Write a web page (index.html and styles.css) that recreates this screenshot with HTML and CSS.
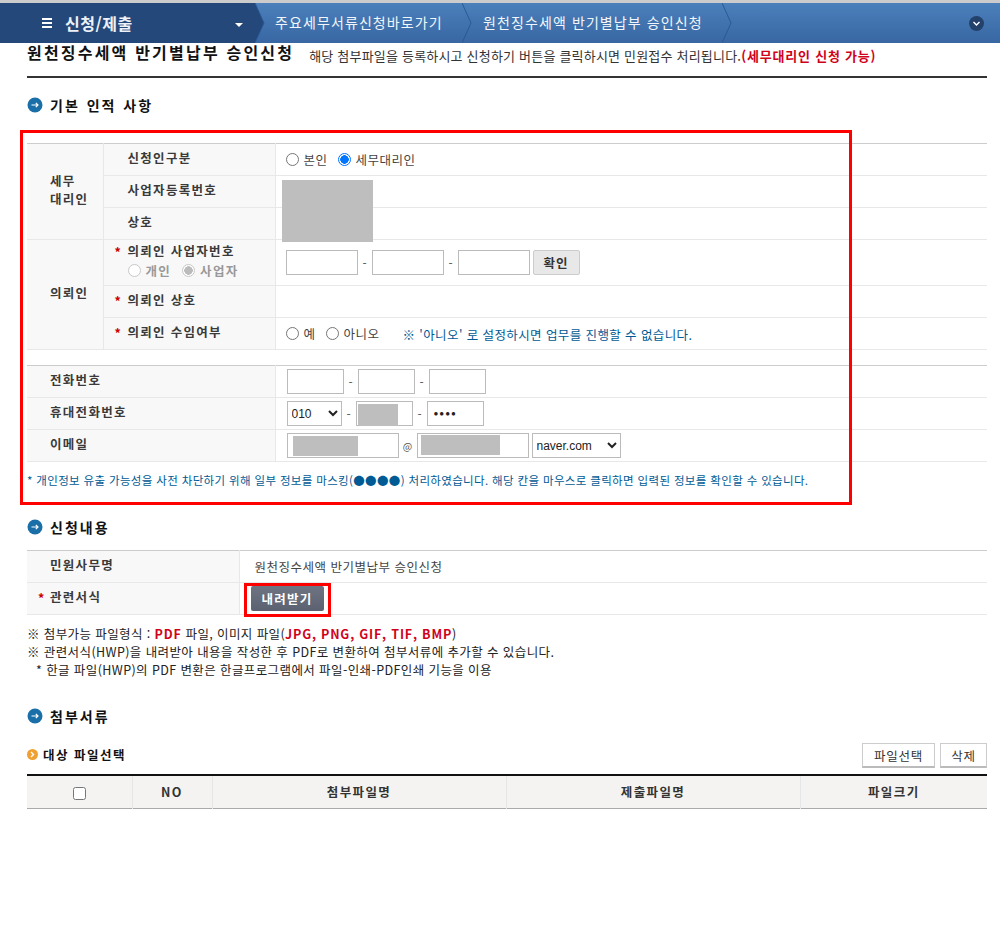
FILE: index.html
```html
<!DOCTYPE html>
<html lang="ko">
<head>
  <meta charset="UTF-8">
  <meta name="viewport" content="width=device-width, initial-scale=1.0">
  <title>원천징수세액 반기별납부 승인신청</title>
  <link rel="stylesheet" href="styles.css">
</head>
<body>
  <nav class="topbar">
    <div class="menu-main">
      <span class="burger"><i></i><i></i><i></i></span>
      <span class="menu-title">신청/제출</span>
      <span class="caret"></span>
      <svg class="chev chev-dark" viewBox="0 0 10 40" preserveAspectRatio="none"><path d="M0 0 L9 20 L0 40 Z" fill="#24487a"/><path d="M0 0 L9 20 L0 40" fill="none" stroke="#2a5a94"/></svg>
    </div>
    <div class="crumb">주요세무서류신청바로가기<svg class="chev" viewBox="0 0 10 40" preserveAspectRatio="none"><path d="M0 0 L9 20 L0 40" fill="none" stroke="#2a5a94"/></svg></div>
    <div class="crumb">원천징수세액 반기별납부 승인신청<svg class="chev" viewBox="0 0 10 40" preserveAspectRatio="none"><path d="M0 0 L9 20 L0 40" fill="none" stroke="#2a5a94"/></svg></div>
    <div class="crumb-spacer"></div>
    <svg class="more" viewBox="0 0 15 15"><circle cx="7.5" cy="7.5" r="7.5" fill="#24416b"/><path d="M4.5 6 L7.5 9 L10.5 6" fill="none" stroke="#fff" stroke-width="1.4"/></svg>
  </nav>

  <div class="container">
    <header class="page-head">
      <h1>원천징수세액 반기별납부 승인신청</h1>
      <p>해당 첨부파일을 등록하시고 신청하기 버튼을 클릭하시면 민원접수 처리됩니다.<b>(세무대리인 신청 가능)</b></p>
    </header>

    <h2 class="sec sec-first"><svg class="sec-icon" viewBox="0 0 16 16"><circle cx="8" cy="8" r="7.5" fill="#1b6fa8"/><path d="M4.5 8 H11 M8.8 5.8 L11 8 L8.8 10.2" fill="none" stroke="#fff" stroke-width="1.2"/></svg>기본 인적 사항</h2>

    <div class="box-wrap">
      <table class="form-table t1">
        <tr>
          <th class="col-a" rowspan="3">세무<br>대리인</th>
          <th class="col-b"><span class="lbl">신청인구분</span></th>
          <td class="radios"><label class="radio"><span class="dot"></span>본인</label><label class="radio"><span class="dot on"></span>세무대리인</label></td>
        </tr>
        <tr>
          <th class="col-b"><span class="lbl">사업자등록번호</span></th>
          <td class="masked-cell"><div class="mask mask-biz"></div></td>
        </tr>
        <tr>
          <th class="col-b"><span class="lbl">상호</span></th>
          <td></td>
        </tr>
        <tr class="tall">
          <th class="col-a" rowspan="3">의뢰인</th>
          <th class="col-b">
            <span class="lbl req">의뢰인 사업자번호</span>
            <span class="sub-radios"><label class="radio off"><span class="dot"></span>개인</label><label class="radio off"><span class="dot picked"></span>사업자</label></span>
          </th>
          <td><div class="fields"><input class="in in72" type="text"><span class="dash">-</span><input class="in in72" type="text"><span class="dash">-</span><input class="in in72" type="text"><button class="btn-check" type="button">확인</button></div></td>
        </tr>
        <tr>
          <th class="col-b"><span class="lbl req">의뢰인 상호</span></th>
          <td></td>
        </tr>
        <tr>
          <th class="col-b"><span class="lbl req">의뢰인 수임여부</span></th>
          <td class="radios"><label class="radio"><span class="dot"></span>예</label><label class="radio"><span class="dot"></span>아니오</label><span class="note">※ '아니오' 로 설정하시면 업무를 진행할 수 없습니다.</span></td>
        </tr>
      </table>

      <table class="form-table t2">
        <tr>
          <th class="col-w"><span class="lbl2">전화번호</span></th>
          <td><div class="fields fields-b"><input class="in in57" type="text"><span class="dash">-</span><input class="in in57" type="text"><span class="dash">-</span><input class="in in57" type="text"></div></td>
        </tr>
        <tr>
          <th class="col-w"><span class="lbl2">휴대전화번호</span></th>
          <td><div class="fields fields-b"><select class="sel sel55"><option>010</option></select><span class="dash">-</span><span class="mask-in"><input class="in in57" type="text"><span class="mask mask-tel"></span></span><span class="dash">-</span><input class="in in57 pw" type="text" value="●●●●"></div></td>
        </tr>
        <tr>
          <th class="col-w"><span class="lbl2">이메일</span></th>
          <td><div class="fields fields-b"><span class="mask-in"><input class="in in112" type="text"><span class="mask mask-mail1"></span></span><span class="at">@</span><span class="mask-in"><input class="in in112" type="text"><span class="mask mask-mail2"></span></span><select class="sel sel89"><option>naver.com</option></select></div></td>
        </tr>
      </table>
      <p class="privacy">* 개인정보 유출 가능성을 사전 차단하기 위해 일부 정보를 마스킹(●●●●) 처리하였습니다. 해당 칸을 마우스로 클릭하면 입력된 정보를 확인할 수 있습니다.</p>
      <div class="red-box red-main"></div>
    </div>

    <h2 class="sec sec-two"><svg class="sec-icon" viewBox="0 0 16 16"><circle cx="8" cy="8" r="7.5" fill="#1b6fa8"/><path d="M4.5 8 H11 M8.8 5.8 L11 8 L8.8 10.2" fill="none" stroke="#fff" stroke-width="1.2"/></svg>신청내용</h2>
    <table class="form-table t3">
      <tr>
        <th class="col-c"><span class="lbl3">민원사무명</span></th>
        <td class="plain">원천징수세액 반기별납부 승인신청</td>
      </tr>
      <tr>
        <th class="col-c"><span class="lbl3 req">관련서식</span></th>
        <td class="btn-cell"><span class="btn-hold"><button class="btn-down" type="button">내려받기</button><span class="red-box red-btn"></span></span></td>
      </tr>
    </table>
    <div class="notes">
      <p>※ 첨부가능 파일형식 : <b>PDF</b> 파일, 이미지 파일(<b>JPG, PNG, GIF, TIF, BMP</b>)</p>
      <p>※ 관련서식(HWP)을 내려받아 내용을 작성한 후 PDF로 변환하여 첨부서류에 추가할 수 있습니다.</p>
      <p class="indent">* 한글 파일(HWP)의 PDF 변환은 한글프로그램에서 파일-인쇄-PDF인쇄 기능을 이용</p>
    </div>

    <h2 class="sec sec-three"><svg class="sec-icon" viewBox="0 0 16 16"><circle cx="8" cy="8" r="7.5" fill="#1b6fa8"/><path d="M4.5 8 H11 M8.8 5.8 L11 8 L8.8 10.2" fill="none" stroke="#fff" stroke-width="1.2"/></svg>첨부서류</h2>
    <div class="file-head">
      <h3><svg class="sub-icon" viewBox="0 0 11 11"><circle cx="5.5" cy="5.5" r="5.5" fill="#f0a030"/><path d="M4 3 L6.5 5.5 L4 8" fill="none" stroke="#fff" stroke-width="1.4"/></svg>대상 파일선택</h3>
      <div class="file-btns"><button class="btn-file btn-w73" type="button">파일선택</button><button class="btn-file btn-w47" type="button">삭제</button></div>
    </div>
    <table class="file-table">
      <tr>
        <th class="f1"><input type="checkbox" class="chk"></th>
        <th class="f2">NO</th>
        <th class="f3">첨부파일명</th>
        <th class="f3">제출파일명</th>
        <th>파일크기</th>
      </tr>
    </table>
  </div>
</body>
</html>
```

FILE: styles.css
```css
* {
  box-sizing: border-box;
}

body {
  margin: 0;
  padding-top: 3px;
  font-family: "Noto Sans CJK KR", "Liberation Sans", sans-serif;
  font-size: 12px;
  color: #333;
  background: #fff;
}

/* top bar */
.topbar {
  display: flex;
  align-items: center;
  height: 40px;
  background: linear-gradient(#4b80bb, #3867a3);
  color: #fff;
  position: relative;
  box-shadow: 0 -3px 0 #ccc;
}

.menu-main {
  display: flex;
  align-items: center;
  width: 255px;
  height: 40px;
  padding-left: 42px;
  background: #24487a;
  position: relative;
  flex: none;
}

.burger {
  display: flex;
  flex-direction: column;
  gap: 2px;
  width: 10px;
  margin-right: 13px;
}

.burger i {
  display: block;
  height: 2px;
  background: #fff;
}

.menu-title {
  font-size: 16px;
  font-weight: 700;
  color: #eef2f7;
  letter-spacing: 0.5px;
}

.caret {
  position: absolute;
  left: 235px;
  top: 20px;
  border: 4px solid transparent;
  border-top: 4px solid #fff;
  border-bottom: 0;
}

.chev {
  position: absolute;
  top: 0;
  width: 10px;
  height: 40px;
}

.chev-dark {
  left: 255px;
}

.crumb {
  position: relative;
  height: 40px;
  line-height: 39px;
  font-size: 14px;
  letter-spacing: 1.1px;
  color: #f2f6fb;
  white-space: nowrap;
  padding-left: 20px;
}

.crumb:nth-child(2) {
  width: 208px;
}

.crumb:nth-child(3) {
  width: 260px;
}

.crumb .chev {
  right: -9px;
}

.crumb-spacer {
  flex: 1;
}

.more {
  width: 15px;
  height: 15px;
  margin-right: 16px;
  margin-top: 1px;
}

/* page */
.container {
  width: 960px;
  margin-left: 27px;
}

.page-head {
  display: flex;
  align-items: flex-start;
  height: 35px;
  border-bottom: 2px solid #333;
}

.page-head h1 {
  margin: -1px 0 0;
  font-size: 16px;
  line-height: 21px;
  color: #111;
  font-weight: 700;
  letter-spacing: 2.2px;
  white-space: nowrap;
}

.page-head p {
  margin: 4px 0 0 15px;
  font-size: 13px;
  line-height: 18px;
  white-space: nowrap;
  letter-spacing: 0.2px;
}

.page-head b {
  color: #d0021b;
  letter-spacing: 0.8px;
}

.sec {
  display: flex;
  align-items: center;
  margin: 0;
  height: 20px;
  font-size: 14px;
  font-weight: 700;
  color: #111;
  letter-spacing: 2px;
  word-spacing: 1px;
}

.sec-icon {
  width: 16px;
  height: 16px;
  margin-right: 7px;
  margin-left: 0;
}

.sec-first {
  margin-top: 17px;
}

.box-wrap {
  position: relative;
  margin-top: 28px;
}

.form-table {
  width: 960px;
  border-collapse: collapse;
  table-layout: fixed;
  border-top: 1px solid #ccc;
  border-bottom: 1px solid #ccc;
}

.form-table th {
  background: #f8f8f8;
  font-weight: 700;
  font-size: 12.5px;
  color: #3a3a3a;
  line-height: 16px;
  padding: 0 0 4px;
  text-align: left;
  border-bottom: 1px solid #e8e8e8;
  border-right: 1px solid #e8e8e8;
  letter-spacing: 1.3px;
}

.form-table td {
  padding: 0 0 0 10px;
  border-bottom: 1px solid #e8e8e8;
}

.form-table tr {
  height: 32px;
}

.form-table tr.tall {
  height: 46px;
}

.form-table th.col-a {
  width: 76px;
  padding-left: 23px;
  line-height: 18px;
}

.form-table th.col-b {
  width: 172px;
}

.form-table th.col-w {
  width: 248px;
}

.form-table th.col-c {
  width: 212px;
}

.lbl {
  display: block;
  padding-left: 24px;
  position: relative;
}

.lbl2 {
  display: block;
  padding-left: 23px;
}

.lbl3 {
  display: block;
  padding-left: 23px;
  position: relative;
}

.req::before {
  content: "*";
  position: absolute;
  left: 11px;
  top: 1px;
  color: #c00;
  font-weight: 700;
}

.lbl3.req::before {
  left: 11px;
}

.sub-radios {
  display: flex;
  gap: 11px;
  padding-left: 24px;
  margin-top: 4px;
}

.radios {
  font-size: 12.5px;
  letter-spacing: 0.5px;
}

.radio {
  display: inline-flex;
  align-items: center;
  margin-right: 10px;
  font-weight: 400;
  color: #444;
}

.dot {
  width: 13px;
  height: 13px;
  margin-right: 5px;
  border: 1px solid #767676;
  border-radius: 50%;
  background: #fff;
  flex: none;
}

.dot.on {
  border: 1px solid #0075ff;
  background: radial-gradient(circle, #0075ff 0, #0075ff 4px, #fff 4.5px);
}

.dot.picked {
  border: 1px solid #c8c8c8;
  background: radial-gradient(circle, #bbb 0, #bbb 4px, #fff 4.5px);
}

.radio.off {
  margin-right: 0;
  font-weight: 700;
  color: #999;
}

.radio.off .dot {
  border-color: #c8c8c8;
}

.note {
  margin-left: 13px;
  color: #005a94;
  font-size: 12.5px;
  letter-spacing: 0.4px;
}

.masked-cell {
  position: relative;
}

.mask {
  position: absolute;
  background: #bebebe;
  display: block;
}

.mask-biz {
  left: 6px;
  top: 4px;
  width: 91px;
  height: 62px;
}

.fields {
  display: flex;
  align-items: center;
}

.fields-b {
  margin-left: 1px;
}

.in {
  height: 25px;
  border: 1px solid #bbb;
  background: #fff;
  padding: 0 6px;
  font-family: "Liberation Sans", sans-serif;
  font-size: 12px;
}

.in72 {
  width: 72px;
}

.in57 {
  width: 57px;
}

.in112 {
  width: 112px;
}

.pw {
  font-size: 8px;
  letter-spacing: 1px;
  color: #222;
}

.dash {
  width: 14px;
  text-align: center;
  color: #555;
}

.btn-check {
  width: 47px;
  height: 25px;
  margin-left: 3px;
  border: 1px solid #ccc;
  border-radius: 2px;
  background: #e8e8e8;
  font-family: inherit;
  font-size: 12.5px;
  font-weight: 700;
  letter-spacing: 1px;
  color: #333;
  padding: 0;
}

.sel {
  height: 25px;
  border: 1px solid #bbb;
  background: #fff;
  font-family: "Liberation Sans", sans-serif;
  font-size: 12px;
  color: #222;
}

.sel55 {
  width: 55px;
}

.sel89 {
  width: 89px;
  margin-left: 3px;
}

.mask-in {
  position: relative;
  display: inline-flex;
}

.mask-tel {
  left: 2px;
  top: 3px;
  width: 40px;
  height: 22px;
}

.mask-mail1 {
  left: 6px;
  top: 3px;
  width: 65px;
  height: 20px;
}

.mask-mail2 {
  left: 4px;
  top: 2px;
  width: 79px;
  height: 20px;
}

.at {
  width: 18px;
  text-align: center;
  font-size: 10px;
  color: #555;
}

.t2 {
  margin-top: 15px;
}

.privacy {
  margin: 10px 0 0;
  color: #005a94;
  font-size: 11.5px;
  line-height: 16px;
  white-space: nowrap;
  letter-spacing: 0.35px;
}

/* red annotation boxes */
.red-box {
  position: absolute;
  border: 3px solid #f00;
  pointer-events: none;
}

.red-main {
  left: -7px;
  top: -13px;
  width: 832px;
  height: 375px;
}

.sec-two {
  margin-top: 29px;
}

.t3 {
  margin-top: 13px;
}

.form-table td.plain {
  font-size: 12.5px;
  color: #444;
  padding-left: 15px;
  letter-spacing: 0.5px;
}

.form-table td.btn-cell {
  padding-left: 11px;
}

.btn-hold {
  position: relative;
  display: inline-flex;
  vertical-align: middle;
}

.btn-down {
  width: 73px;
  height: 25px;
  border: 0;
  border-radius: 2px;
  background: linear-gradient(#6e7482, #5b6170);
  color: #fff;
  font-family: inherit;
  font-size: 12.5px;
  font-weight: 700;
  letter-spacing: 1.3px;
  padding: 0;
}

.red-btn {
  left: -7px;
  top: -3px;
  width: 87px;
  height: 34px;
}

.notes {
  margin-top: 10px;
  font-size: 12.5px;
  letter-spacing: 0.4px;
  line-height: 18px;
  color: #222;
  white-space: nowrap;
}

.notes p {
  margin: 0;
}

.notes b {
  color: #d0021b;
  letter-spacing: 0.8px;
}

.notes .indent {
  padding-left: 9px;
}

.sec-three {
  margin-top: 27px;
}

.file-head {
  display: flex;
  justify-content: space-between;
  align-items: center;
  margin-top: 17px;
  height: 25px;
}

.file-head h3 {
  display: flex;
  align-items: center;
  margin: -2px 0 0;
  font-size: 12.5px;
  font-weight: 700;
  color: #111;
  letter-spacing: 1.5px;
}

.sub-icon {
  width: 11px;
  height: 11px;
  margin-right: 5px;
}

.file-btns {
  display: flex;
  gap: 5px;
}

.btn-file {
  height: 25px;
  padding: 0;
  border: 1px solid #ccc;
  border-bottom: 2px solid #bbb;
  background: #fff;
  font-family: inherit;
  font-size: 12.5px;
  letter-spacing: 0.8px;
  color: #333;
}

.btn-w73 {
  width: 73px;
}

.btn-w47 {
  width: 47px;
}

.file-table {
  width: 960px;
  margin-top: 6px;
  border-collapse: collapse;
  table-layout: fixed;
  border-top: 2px solid #111;
  border-bottom: 1px solid #aaa;
}

.file-table tr {
  height: 33px;
}

.file-table th {
  background: #f4f3f1;
  border-right: 1px solid #e6e6e6;
  font-size: 12.5px;
  font-weight: 700;
  letter-spacing: 1.4px;
  color: #333;
  padding: 0;
}

.file-table th:last-child {
  border-right: 0;
}

.f1 {
  width: 105px;
}

.f2 {
  width: 80px;
}

.f3 {
  width: 294px;
}

.chk {
  width: 13px;
  height: 13px;
  margin: 0;
  vertical-align: middle;
}
```
